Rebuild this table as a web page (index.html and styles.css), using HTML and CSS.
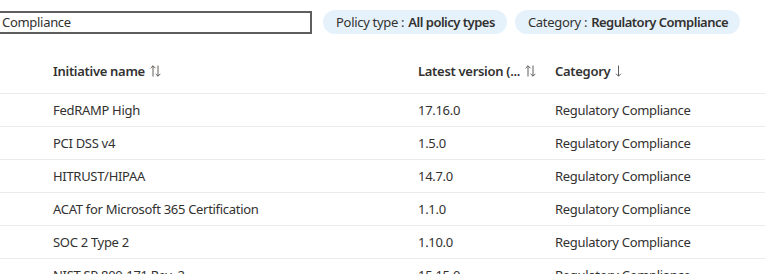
FILE: index.html
```html
<!DOCTYPE html>
<html lang="en">
<head>
  <meta charset="UTF-8">
  <title>Initiatives</title>
  <link rel="stylesheet" href="styles.css">
</head>
<body>
  <div class="toolbar">
    <input class="search" type="text" value="Compliance">
    <span class="pill">Policy type : <b>All policy types</b></span>
    <span class="pill">Category : <b>Regulatory Compliance</b></span>
  </div>

  <table class="grid">
    <thead>
      <tr>
        <th class="col-name">Initiative name
          <svg class="sort" width="11" height="12" viewBox="0 0 11 12"><path d="M3 11.5V0.8M0.6 3.2L3 0.8L5.4 3.2M8 0.5V11.2M5.6 8.8L8 11.2L10.4 8.8"/></svg>
        </th>
        <th class="col-version">Latest version (...
          <svg class="sort" width="11" height="12" viewBox="0 0 11 12"><path d="M3 11.5V0.8M0.6 3.2L3 0.8L5.4 3.2M8 0.5V11.2M5.6 8.8L8 11.2L10.4 8.8"/></svg>
        </th>
        <th class="col-cat">Category
          <svg class="sort" width="7" height="12" viewBox="0 0 7 12"><path d="M3.5 0.5V11.2M1 8.7L3.5 11.2L6 8.7"/></svg>
        </th>
      </tr>
    </thead>
    <tbody>
      <tr><td>FedRAMP High</td><td>17.16.0</td><td>Regulatory Compliance</td></tr>
      <tr><td>PCI DSS v4</td><td>1.5.0</td><td>Regulatory Compliance</td></tr>
      <tr><td>HITRUST/HIPAA</td><td>14.7.0</td><td>Regulatory Compliance</td></tr>
      <tr><td>ACAT for Microsoft 365 Certification</td><td>1.1.0</td><td>Regulatory Compliance</td></tr>
      <tr><td>SOC 2 Type 2</td><td>1.10.0</td><td>Regulatory Compliance</td></tr>
      <tr><td>NIST SP 800-171 Rev. 2</td><td>15.15.0</td><td>Regulatory Compliance</td></tr>
    </tbody>
  </table>
</body>
</html>
```
FILE: styles.css
```css
body {
  margin: 0;
  background: #ffffff;
  color: #323130;
  font-family: "Noto Sans", "Open Sans", sans-serif;
  font-size: 13px;
  letter-spacing: -0.3px;
  overflow: hidden;
}

.toolbar {
  display: flex;
  align-items: center;
  gap: 8px;
  padding: 10px 0 0 0;
  height: 24px;
}

.search {
  box-sizing: border-box;
  width: 332px;
  height: 23px;
  margin-left: -20px;
  margin-right: 3px;
  padding: 0 0 0 20px;
  border: 2px solid #605e5c;
  border-radius: 0;
  font: inherit;
  letter-spacing: -0.3px;
  color: #323130;
  outline: none;
}

.pill {
  display: inline-flex;
  align-items: center;
  height: 24px;
  padding: 0 12px 0 13px;
  border-radius: 12px;
  background: #e6f2fb;
  white-space: nowrap;
}

.pill b {
  font-weight: 600;
  letter-spacing: -0.5px;
  margin-left: 4px;
}

.grid {
  border-collapse: collapse;
  margin-top: 15px;
  width: 100%;
}

.grid th,
.grid td {
  text-align: left;
  padding: 0;
  white-space: nowrap;
}

.grid th {
  height: 44px;
  font-weight: 600;
  border-bottom: 1px solid #edebe9;
}

.grid td {
  height: 32px;
  border-bottom: 1px solid #edebe9;
}

.grid th:first-child,
.grid td:first-child {
  padding-left: 53px;
  width: 365px;
}

.grid th:nth-child(2),
.grid td:nth-child(2) {
  width: 137px;
}

.sort {
  vertical-align: -1px;
  margin-left: 2px;
  fill: none;
  stroke: #605e5c;
  stroke-width: 1;
}
```
